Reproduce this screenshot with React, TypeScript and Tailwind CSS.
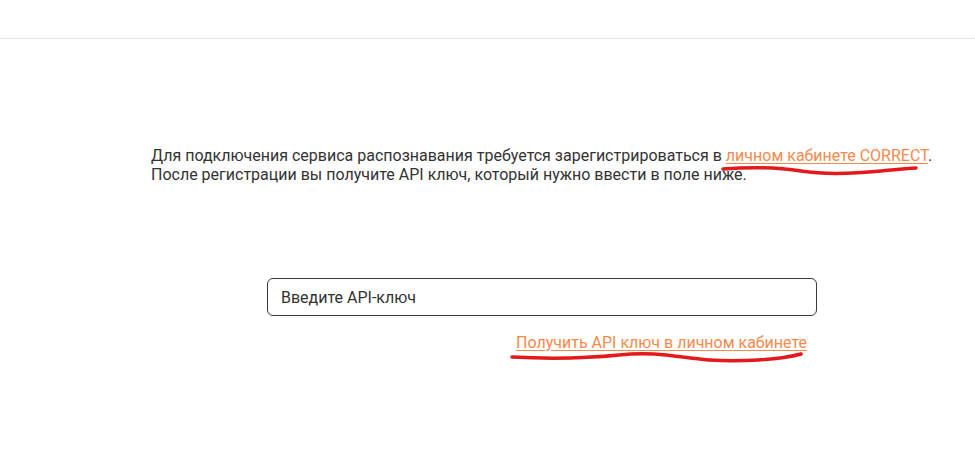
export default function App() {
  return (
    <div className="min-h-[469px] w-full bg-white font-['Roboto','Liberation_Sans',sans-serif] text-[#333333]">
      <header className="h-[39px] border-b border-[#e4e3ea]" />
      <main className="pl-[151px] pt-[107px]">
        <p className="relative w-fit text-[16px] leading-[19px]">
          Для подключения сервиса распознавания требуется зарегистрироваться в{" "}
          <a href="#" className="text-[#f58a4c] underline underline-offset-2">
            личном кабинете CORRECT
          </a>
          .
          <br />
          После регистрации вы получите API ключ, который нужно ввести в поле ниже.
          <svg
            className="pointer-events-none absolute left-[570px] top-[16px]"
            width="200"
            height="14"
            viewBox="0 0 200 14"
          >
            <path
              d="M2 7 C 30 5, 55 5, 80 9 S 130 12, 160 9 S 190 6, 195 6"
              fill="none"
              stroke="#e3191c"
              strokeWidth="3.5"
              strokeLinecap="round"
            />
          </svg>
        </p>
        <div className="ml-[116px] mt-[94px] w-[550px]">
          <input
            type="text"
            placeholder="Введите API-ключ"
            className="h-[38px] w-full rounded-md border border-[#3a3a3a] px-[13px] text-[16px] text-[#333333] placeholder:text-[#333333] outline-none"
          />
          <div className="relative mt-[17px] flex justify-end pr-[10px]">
            <a href="#" className="text-[16px] leading-[19px] text-[#f58a4c] underline underline-offset-2">
              Получить API ключ в личном кабинете
            </a>
            <svg
              className="pointer-events-none absolute left-[242px] top-[16px]"
              width="300"
              height="16"
              viewBox="0 0 300 16"
            >
              <path
                d="M3 8 C 40 10, 70 10, 110 6 S 170 9, 200 11 S 270 11, 292 5"
                fill="none"
                stroke="#e3191c"
                strokeWidth="3.5"
                strokeLinecap="round"
              />
            </svg>
          </div>
        </div>
      </main>
    </div>
  );
}
